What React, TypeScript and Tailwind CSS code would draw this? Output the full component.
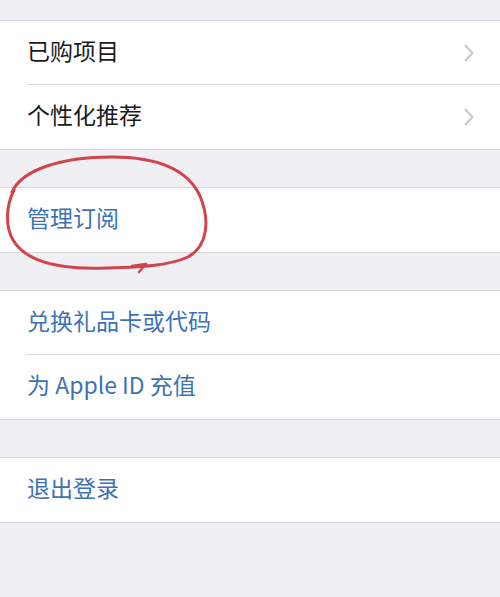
import React from 'react';

const font = { fontFamily: '"Noto Sans CJK SC", "Noto Sans", sans-serif' };

type Item = { label: string; blue?: boolean; chevron?: boolean };

const groups: Item[][] = [
  [
    { label: '已购项目', chevron: true },
    { label: '个性化推荐', chevron: true },
  ],
  [{ label: '管理订阅', blue: true }],
  [
    { label: '兑换礼品卡或代码', blue: true },
    { label: '为 Apple ID 充值', blue: true },
  ],
  [{ label: '退出登录', blue: true }],
];

const Chevron = () => (
  <svg width="10" height="18" viewBox="0 0 10 18" className="mr-[26px]">
    <path d="M1.5 1.5 L8.5 9 L1.5 16.5" fill="none" stroke="#c8c8cd" strokeWidth="2" strokeLinecap="round" strokeLinejoin="round" />
  </svg>
);

const Row = ({ item, last }: { item: Item; last: boolean }) => (
  <div className="relative h-[64px] flex items-center justify-between pl-[27px]">
    <span className={`text-[23px] leading-none mb-[5px] ${item.blue ? 'text-[#3d72b4]' : 'text-[#1b1b1d]'}`}>
      {item.label}
    </span>
    {item.chevron && <Chevron />}
    {!last && <div className="absolute bottom-0 left-[26px] right-0 h-px bg-[#dcdce0]" />}
  </div>
);

export default function App() {
  return (
    <div className="relative w-[500px] h-[597px] bg-[#efeff4] overflow-hidden pt-[20px]" style={font}>
      <div className="flex flex-col gap-[37px]">
        {groups.map((group, gi) => (
          <div key={gi} className="bg-white border-y border-[#d8d8dc]">
            {group.map((item, i) => (
              <Row key={item.label} item={item} last={i === group.length - 1} />
            ))}
          </div>
        ))}
      </div>

      {/* red hand-drawn circle around 管理订阅 */}
      <svg className="absolute left-0 top-0 pointer-events-none" width="500" height="597">
        <path
          d="M 12 192 C 22 170, 60 157, 112 157 C 160 157, 188 170, 200 196 C 210 220, 208 246, 188 257 C 168 266, 140 267, 108 268 C 60 270, 26 262, 13 240 C 5 226, 6 206, 14 190"
          fill="none"
          stroke="#d2434c"
          strokeWidth="3"
          strokeLinecap="round"
        />
        <path d="M 132 266 L 146 264 L 139 272" fill="none" stroke="#d2434c" strokeWidth="2.5" strokeLinecap="round" strokeLinejoin="round" />
      </svg>
    </div>
  );
}
